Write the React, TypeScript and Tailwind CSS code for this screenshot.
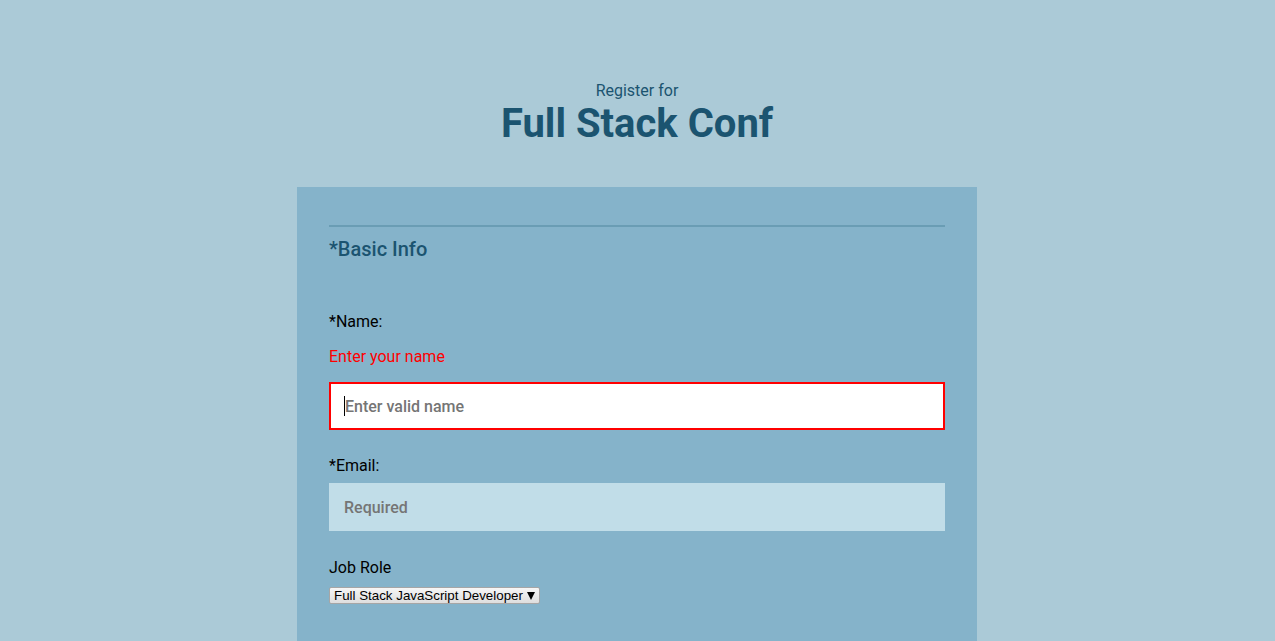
export default function App() {
  return (
    <div className="min-h-screen bg-[#abcad7] pr-px font-['Roboto',sans-serif]">
      {/* Header */}
      <header className="pt-[79px] text-center text-[#1b5470]">
        <p className="text-base leading-6">Register for</p>
        <h1 className="-mt-[3px] text-[40px] font-bold leading-[48px]">Full Stack Conf</h1>
      </header>

      {/* Form card */}
      <form className="mx-auto mt-[39px] w-[680px] bg-[#85b3ca] px-8 pt-[38px] pb-10">
        <fieldset className="border-t-2 border-[#6a9db4]">
          <h2 className="mt-2 text-xl font-medium leading-7 text-[#1b5470]">*Basic Info</h2>

          <label className="mt-[47px] block text-base leading-6 text-black">*Name:</label>
          <p className="mt-[11px] text-base leading-6 text-[#ff0000]">Enter your name</p>
          <div className="mt-[13px] flex h-12 items-center border-2 border-[#ff0000] bg-white pl-[13px]">
            <span className="h-[20px] w-px bg-black" />
            <span className="pt-[2px] text-base font-medium text-[#757575]">Enter valid name</span>
          </div>

          <label className="mt-6 block text-base leading-6 text-black">*Email:</label>
          <div className="mt-[5px] flex h-12 items-center bg-[#c1dde8] pl-[15px]">
            <span className="pt-[2px] text-base font-medium text-[#757575]">Required</span>
          </div>

          <label className="mt-[25px] block text-base leading-6 text-black">Job Role</label>
          <div className="mt-[7px] flex h-[17px] w-[211px] items-center justify-between rounded-[2px] border border-[#a6a6a6] bg-gradient-to-b from-[#f6f6f6] to-[#dedede] pl-1 pr-[4px] pt-px font-['Liberation_Sans',sans-serif] text-[13.33px] leading-none text-black">
            <span>Full Stack JavaScript Developer</span>
            <svg width="8" height="9" viewBox="0 0 8 9" className="mb-px">
              <path d="M0 1h8L4 9z" fill="black" />
            </svg>
          </div>
        </fieldset>
      </form>
    </div>
  );
}
